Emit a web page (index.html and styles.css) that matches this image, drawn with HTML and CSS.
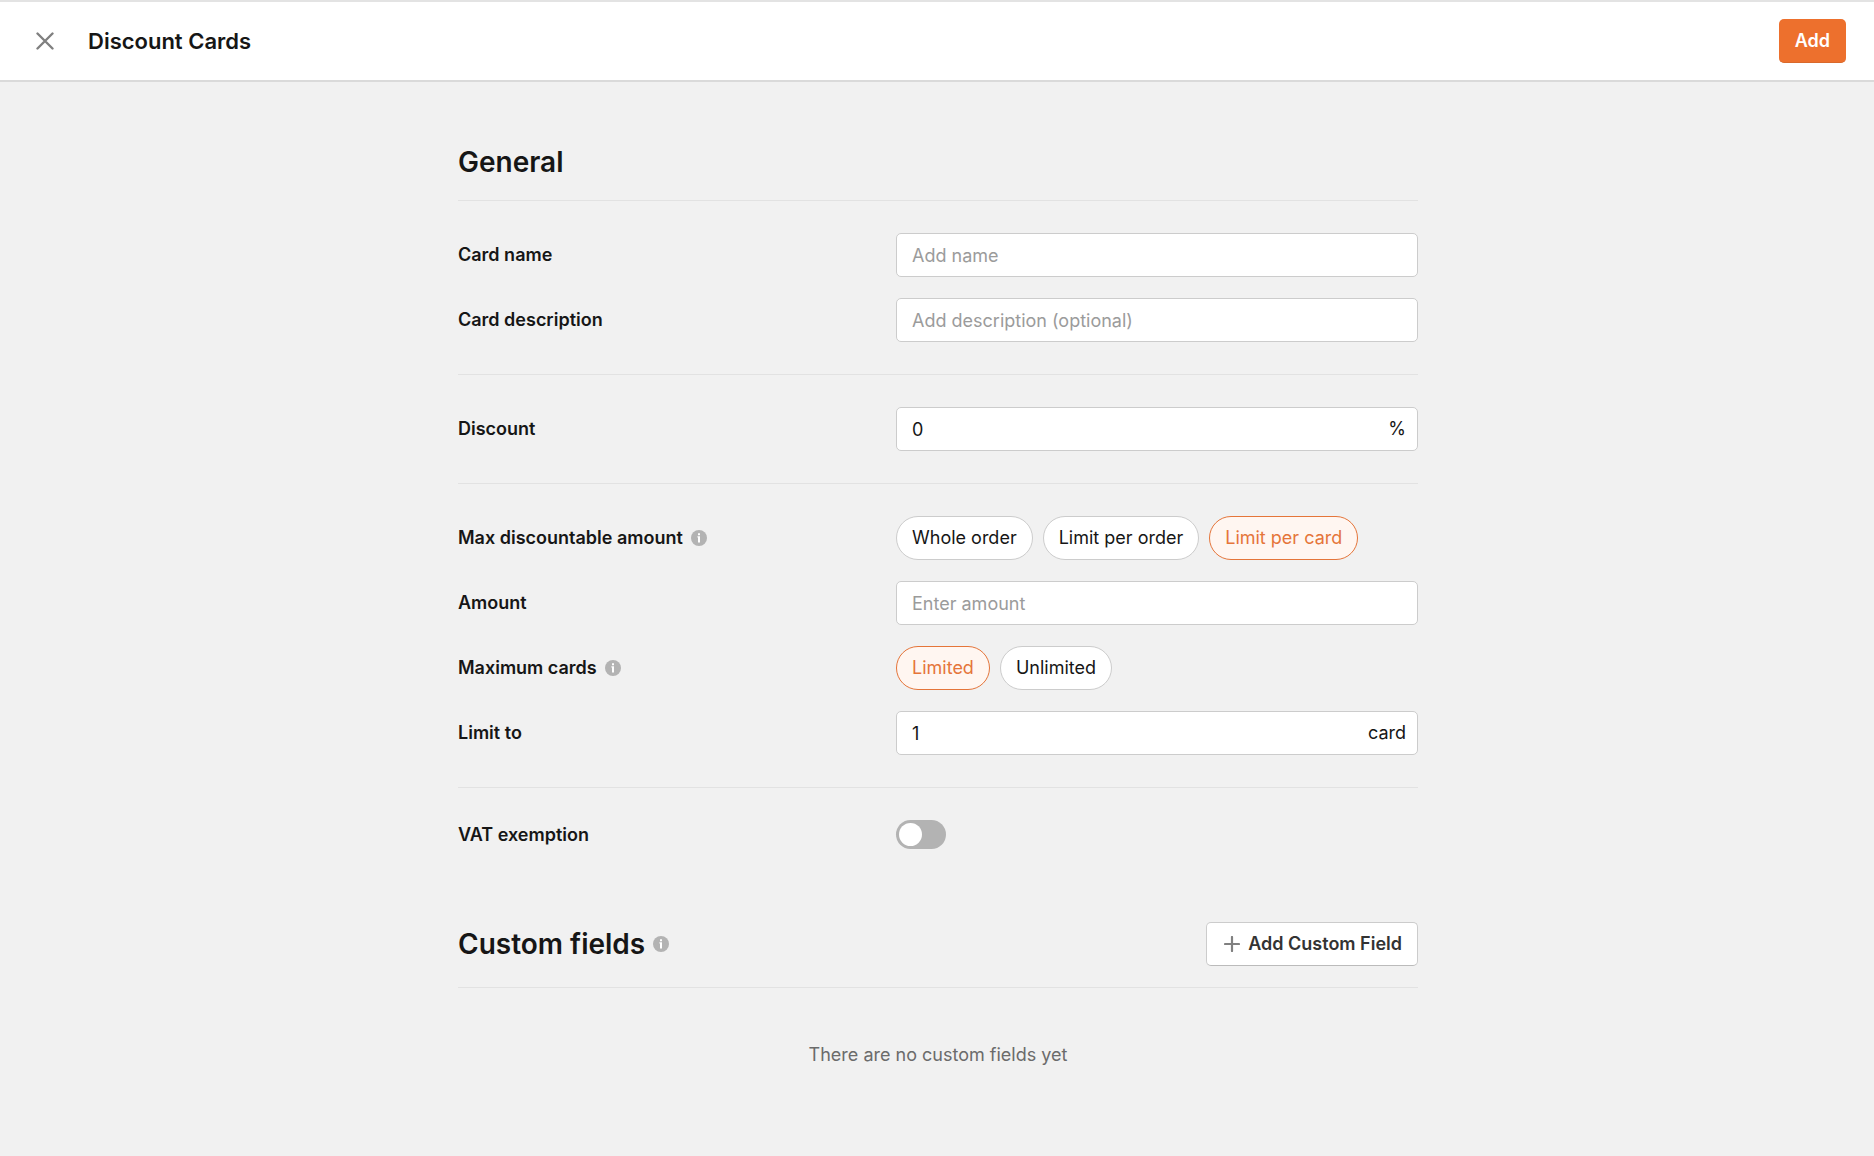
FILE: index.html
```html
<!DOCTYPE html>
<html lang="en">

<head>
    <meta charset="UTF-8">
    <meta name="viewport" content="width=device-width, initial-scale=1.0">
    <title>Discount Cards</title>
    <link rel="stylesheet" href="styles.css">
</head>

<body>
    <header class="page-header">
        <button type="button" class="close-btn" aria-label="Close">
            <svg width="18" height="18" viewBox="0 0 18 18" fill="none" stroke="#808080" stroke-width="2.4" stroke-linecap="round">
                <path d="M1.5 1.5l15 15M16.5 1.5l-15 15" />
            </svg>
        </button>
        <h1 class="page-title">Discount Cards</h1>
        <button type="submit" form="cardForm" class="add-btn">Add</button>
    </header>

    <main class="page-main">
        <form id="cardForm" class="card-form">
            <div class="section-header">
                <h2 class="section-title">General</h2>
            </div>

            <div class="group">
                <div class="row">
                    <label class="row-label" for="cardName">Card name</label>
                    <div class="field">
                        <input type="text" id="cardName" placeholder="Add name">
                    </div>
                </div>
                <div class="row">
                    <label class="row-label" for="cardDescription">Card description</label>
                    <div class="field">
                        <input type="text" id="cardDescription" placeholder="Add description (optional)">
                    </div>
                </div>
            </div>

            <div class="group">
                <div class="row">
                    <label class="row-label" for="discount">Discount</label>
                    <div class="field">
                        <input type="text" id="discount" inputmode="decimal" value="0">
                        <span class="unit">%</span>
                    </div>
                </div>
            </div>

            <div class="group">
                <div class="row">
                    <div class="row-label" id="maxAmountLabel">
                        Max discountable amount
                        <svg width="16" height="16" viewBox="0 0 16 16">
                            <circle cx="8" cy="8" r="8" fill="#b3b3b3" />
                            <path d="M7 3.3h2v2H7zM6.4 6.3H9v6.2H7V7.4h-.6z" fill="#fff" />
                        </svg>
                    </div>
                    <div class="chips" role="radiogroup" aria-labelledby="maxAmountLabel">
                        <label class="chip"><input type="radio" name="maxAmount">Whole order</label>
                        <label class="chip"><input type="radio" name="maxAmount">Limit per order</label>
                        <label class="chip"><input type="radio" name="maxAmount" checked>Limit per card</label>
                    </div>
                </div>
                <div class="row">
                    <label class="row-label" for="amount">Amount</label>
                    <div class="field">
                        <input type="text" id="amount" inputmode="decimal" placeholder="Enter amount">
                    </div>
                </div>
                <div class="row">
                    <div class="row-label" id="maxCardsLabel">
                        Maximum cards
                        <svg width="16" height="16" viewBox="0 0 16 16">
                            <circle cx="8" cy="8" r="8" fill="#b3b3b3" />
                            <path d="M7 3.3h2v2H7zM6.4 6.3H9v6.2H7V7.4h-.6z" fill="#fff" />
                        </svg>
                    </div>
                    <div class="chips" role="radiogroup" aria-labelledby="maxCardsLabel">
                        <label class="chip"><input type="radio" name="maxCards" checked>Limited</label>
                        <label class="chip"><input type="radio" name="maxCards">Unlimited</label>
                    </div>
                </div>
                <div class="row">
                    <label class="row-label" for="limitTo">Limit to</label>
                    <div class="field">
                        <input type="text" id="limitTo" inputmode="numeric" value="1">
                        <span class="unit">card</span>
                    </div>
                </div>
            </div>

            <div class="group">
                <div class="row row-toggle">
                    <label class="row-label" for="vatExemption">VAT exemption</label>
                    <input type="checkbox" id="vatExemption" class="toggle" role="switch">
                </div>
            </div>

            <div class="section-header custom-header">
                <h2 class="section-title">
                    Custom fields
                    <svg width="16" height="16" viewBox="0 0 16 16">
                        <circle cx="8" cy="8" r="8" fill="#b3b3b3" />
                        <path d="M7 3.3h2v2H7zM6.4 6.3H9v6.2H7V7.4h-.6z" fill="#fff" />
                    </svg>
                </h2>
                <button type="button" class="custom-btn">
                    <svg width="16" height="16" viewBox="0 0 16 16" fill="none" stroke="#808080" stroke-width="2.2" stroke-linecap="round">
                        <path d="M8 1v14M1 8h14" />
                    </svg>
                    Add Custom Field
                </button>
            </div>
            <p class="empty">There are no custom fields yet</p>
        </form>
    </main>
</body>

</html>
```
FILE: styles.css
```css
* {
    box-sizing: border-box;
}

body {
    margin: 0;
    min-height: 100vh;
    background: #f1f1f1;
    color: #161616;
    font-family: Inter, "Liberation Sans", sans-serif;
    font-size: 18px;
    line-height: 24px;
}

button,
input {
    font: inherit;
    color: inherit;
}

button {
    cursor: pointer;
}

svg {
    display: block;
    flex-shrink: 0;
}

/* Header */
.page-header {
    display: flex;
    align-items: center;
    height: 82px;
    padding: 0 28px;
    background: #fff;
    border-top: 2px solid #e3e3e3;
    border-bottom: 2px solid #dadada;
}

.close-btn {
    padding: 8px;
    background: none;
    border: none;
}

.page-title {
    margin: 0 auto 0 26px;
    font-size: 22px;
    line-height: 28px;
    font-weight: 600;
}

.add-btn {
    height: 44px;
    padding: 0 16px;
    background: #ed702d;
    border: none;
    border-bottom: 1px solid #d9692c;
    border-radius: 5px;
    color: #fff;
    font-weight: 600;
}

/* Form */
.page-main {
    padding: 57px 24px 48px 26px;
}

.card-form {
    max-width: 960px;
    margin: 0 auto;
}

.section-header {
    display: flex;
    align-items: center;
    justify-content: space-between;
    height: 61px;
    padding-bottom: 15px;
}

.custom-header {
    height: 66px;
    margin-top: 41px;
    padding-bottom: 21px;
    border-bottom: 1px solid #e2e2e2;
}

.section-title {
    display: flex;
    align-items: center;
    gap: 8px;
    margin: 0;
    font-size: 28px;
    line-height: 36px;
    font-weight: 600;
}

.group {
    display: grid;
    gap: 21px;
    padding: 32px 0;
    border-top: 1px solid #e2e2e2;
}

.row {
    display: grid;
    grid-template-columns: 438px 1fr;
    align-items: center;
    min-height: 44px;
}

.row-toggle {
    min-height: 29px;
}

.row-label {
    display: flex;
    align-items: center;
    gap: 8px;
    font-weight: 600;
}

.field {
    display: flex;
    align-items: center;
    height: 44px;
    padding-right: 11px;
    background: #fff;
    border: 1px solid #ccc;
    border-radius: 5px;
}

.field:focus-within {
    border-color: #ed702d;
}

.field input {
    flex: 1;
    min-width: 0;
    height: 100%;
    padding: 0 0 0 15px;
    background: none;
    border: none;
    outline: none;
}

.field input::placeholder {
    color: #9b9b9b;
    opacity: 1;
}

.chips {
    display: flex;
    flex-wrap: wrap;
    gap: 10px;
}

.chip {
    display: flex;
    align-items: center;
    height: 44px;
    padding: 0 15px;
    background: #fff;
    border: 1px solid #ccc;
    border-radius: 22px;
    cursor: pointer;
}

.chip input {
    appearance: none;
    width: 0;
    height: 0;
    margin: 0;
}

.chip:has(input:checked) {
    background: #fff6f1;
    border-color: #e5753a;
    color: #e5753a;
}

.toggle {
    appearance: none;
    display: flex;
    align-items: center;
    width: 50px;
    height: 29px;
    margin: 0;
    padding: 0 3px;
    background: #b3b3b3;
    border-radius: 15px;
    cursor: pointer;
}

.toggle::before {
    content: "";
    width: 23px;
    height: 23px;
    background: #fff;
    border-radius: 50%;
}

.toggle:checked {
    justify-content: flex-end;
    background: #ed702d;
}

.custom-btn {
    display: flex;
    align-items: center;
    gap: 8px;
    height: 44px;
    padding: 0 15px 0 17px;
    background: #fff;
    border: 1px solid #ccc;
    border-bottom-color: #bbb;
    border-radius: 5px;
    color: #333;
    font-weight: 600;
}

.empty {
    margin: 55px 0 0;
    text-align: center;
    color: #6b6b6b;
}
```
